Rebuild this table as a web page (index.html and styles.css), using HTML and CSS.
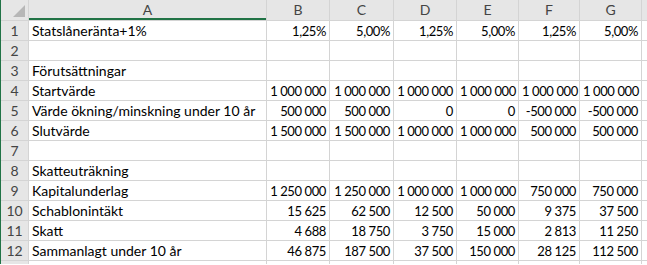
FILE: index.html
```html
<!DOCTYPE html>
<html lang="sv">
<head>
<meta charset="utf-8">
<title>Blad</title>
<link rel="stylesheet" href="styles.css">
</head>
<body>
<div class="sheet">
  <div class="corner"><span class="tri"></span></div>
  <div class="ch sel">A</div>
  <div class="ch">B</div>
  <div class="ch">C</div>
  <div class="ch">D</div>
  <div class="ch">E</div>
  <div class="ch">F</div>
  <div class="ch">G</div>
  <div class="ch"></div>

  <div class="rh">1</div><div class="c">Statslåneränta+1%</div><div class="c n">1,25%</div><div class="c n">5,00%</div><div class="c n">1,25%</div><div class="c n">5,00%</div><div class="c n">1,25%</div><div class="c n">5,00%</div><div class="c"></div>
  <div class="rh">2</div><div class="c"></div><div class="c"></div><div class="c"></div><div class="c"></div><div class="c"></div><div class="c"></div><div class="c"></div><div class="c"></div>
  <div class="rh">3</div><div class="c">Förutsättningar</div><div class="c"></div><div class="c"></div><div class="c"></div><div class="c"></div><div class="c"></div><div class="c"></div><div class="c"></div>
  <div class="rh">4</div><div class="c">Startvärde</div><div class="c n">1 000 000</div><div class="c n">1 000 000</div><div class="c n">1 000 000</div><div class="c n">1 000 000</div><div class="c n">1 000 000</div><div class="c n">1 000 000</div><div class="c"></div>
  <div class="rh">5</div><div class="c">Värde ökning/minskning under 10 år</div><div class="c n">500 000</div><div class="c n">500 000</div><div class="c n">0</div><div class="c n">0</div><div class="c n">-500 000</div><div class="c n">-500 000</div><div class="c"></div>
  <div class="rh">6</div><div class="c">Slutvärde</div><div class="c n">1 500 000</div><div class="c n">1 500 000</div><div class="c n">1 000 000</div><div class="c n">1 000 000</div><div class="c n">500 000</div><div class="c n">500 000</div><div class="c"></div>
  <div class="rh">7</div><div class="c"></div><div class="c"></div><div class="c"></div><div class="c"></div><div class="c"></div><div class="c"></div><div class="c"></div><div class="c"></div>
  <div class="rh">8</div><div class="c">Skatteuträkning</div><div class="c"></div><div class="c"></div><div class="c"></div><div class="c"></div><div class="c"></div><div class="c"></div><div class="c"></div>
  <div class="rh">9</div><div class="c">Kapitalunderlag</div><div class="c n">1 250 000</div><div class="c n">1 250 000</div><div class="c n">1 000 000</div><div class="c n">1 000 000</div><div class="c n">750 000</div><div class="c n">750 000</div><div class="c"></div>
  <div class="rh">10</div><div class="c">Schablonintäkt</div><div class="c n">15 625</div><div class="c n">62 500</div><div class="c n">12 500</div><div class="c n">50 000</div><div class="c n">9 375</div><div class="c n">37 500</div><div class="c"></div>
  <div class="rh">11</div><div class="c">Skatt</div><div class="c n">4 688</div><div class="c n">18 750</div><div class="c n">3 750</div><div class="c n">15 000</div><div class="c n">2 813</div><div class="c n">11 250</div><div class="c"></div>
  <div class="rh">12</div><div class="c">Sammanlagt under 10 år</div><div class="c n">46 875</div><div class="c n">187 500</div><div class="c n">37 500</div><div class="c n">150 000</div><div class="c n">28 125</div><div class="c n">112 500</div><div class="c"></div>
  <div class="rh"></div><div class="c"></div><div class="c"></div><div class="c"></div><div class="c"></div><div class="c"></div><div class="c"></div><div class="c"></div><div class="c"></div>
</div>
</body>
</html>
```
FILE: styles.css
```css
html, body {
  margin: 0;
  padding: 0;
  background: #ffffff;
  overflow: hidden;
}
.sheet {
  display: grid;
  grid-template-columns: 27px 237px 62px 63px 62px 61px 60px 61px 20px;
  grid-template-rows: 20px repeat(12, 19px) 3px;
  gap: 1px;
  background: #d4d4d4;
  width: 660px;
  font-family: Lato, "Liberation Sans", sans-serif;
  font-size: 14px;
  color: #000;
  border-left: 2px solid #217346;
  margin-left: -1px;
}
.corner {
  background: #e6e6e6;
  position: relative;
}
.tri {
  position: absolute;
  right: 3px;
  bottom: 3px;
  width: 0;
  height: 0;
  border-left: 12px solid transparent;
  border-bottom: 12px solid #b7b7b7;
}
.ch {
  background: #e6e6e6;
  color: #444;
  text-align: center;
  line-height: 20px;
}
.ch.sel {
  box-shadow: inset 0 -2px 0 #217346;
}
.rh {
  background: #e6e6e6;
  color: #444;
  text-align: center;
  line-height: 20px;
}
.c {
  background: #fff;
  padding: 0 3px;
  line-height: 20px;
  white-space: nowrap;
  overflow: hidden;
}
.n {
  text-align: right;
  font-size: 13px;
  letter-spacing: -0.4px;
}
```
